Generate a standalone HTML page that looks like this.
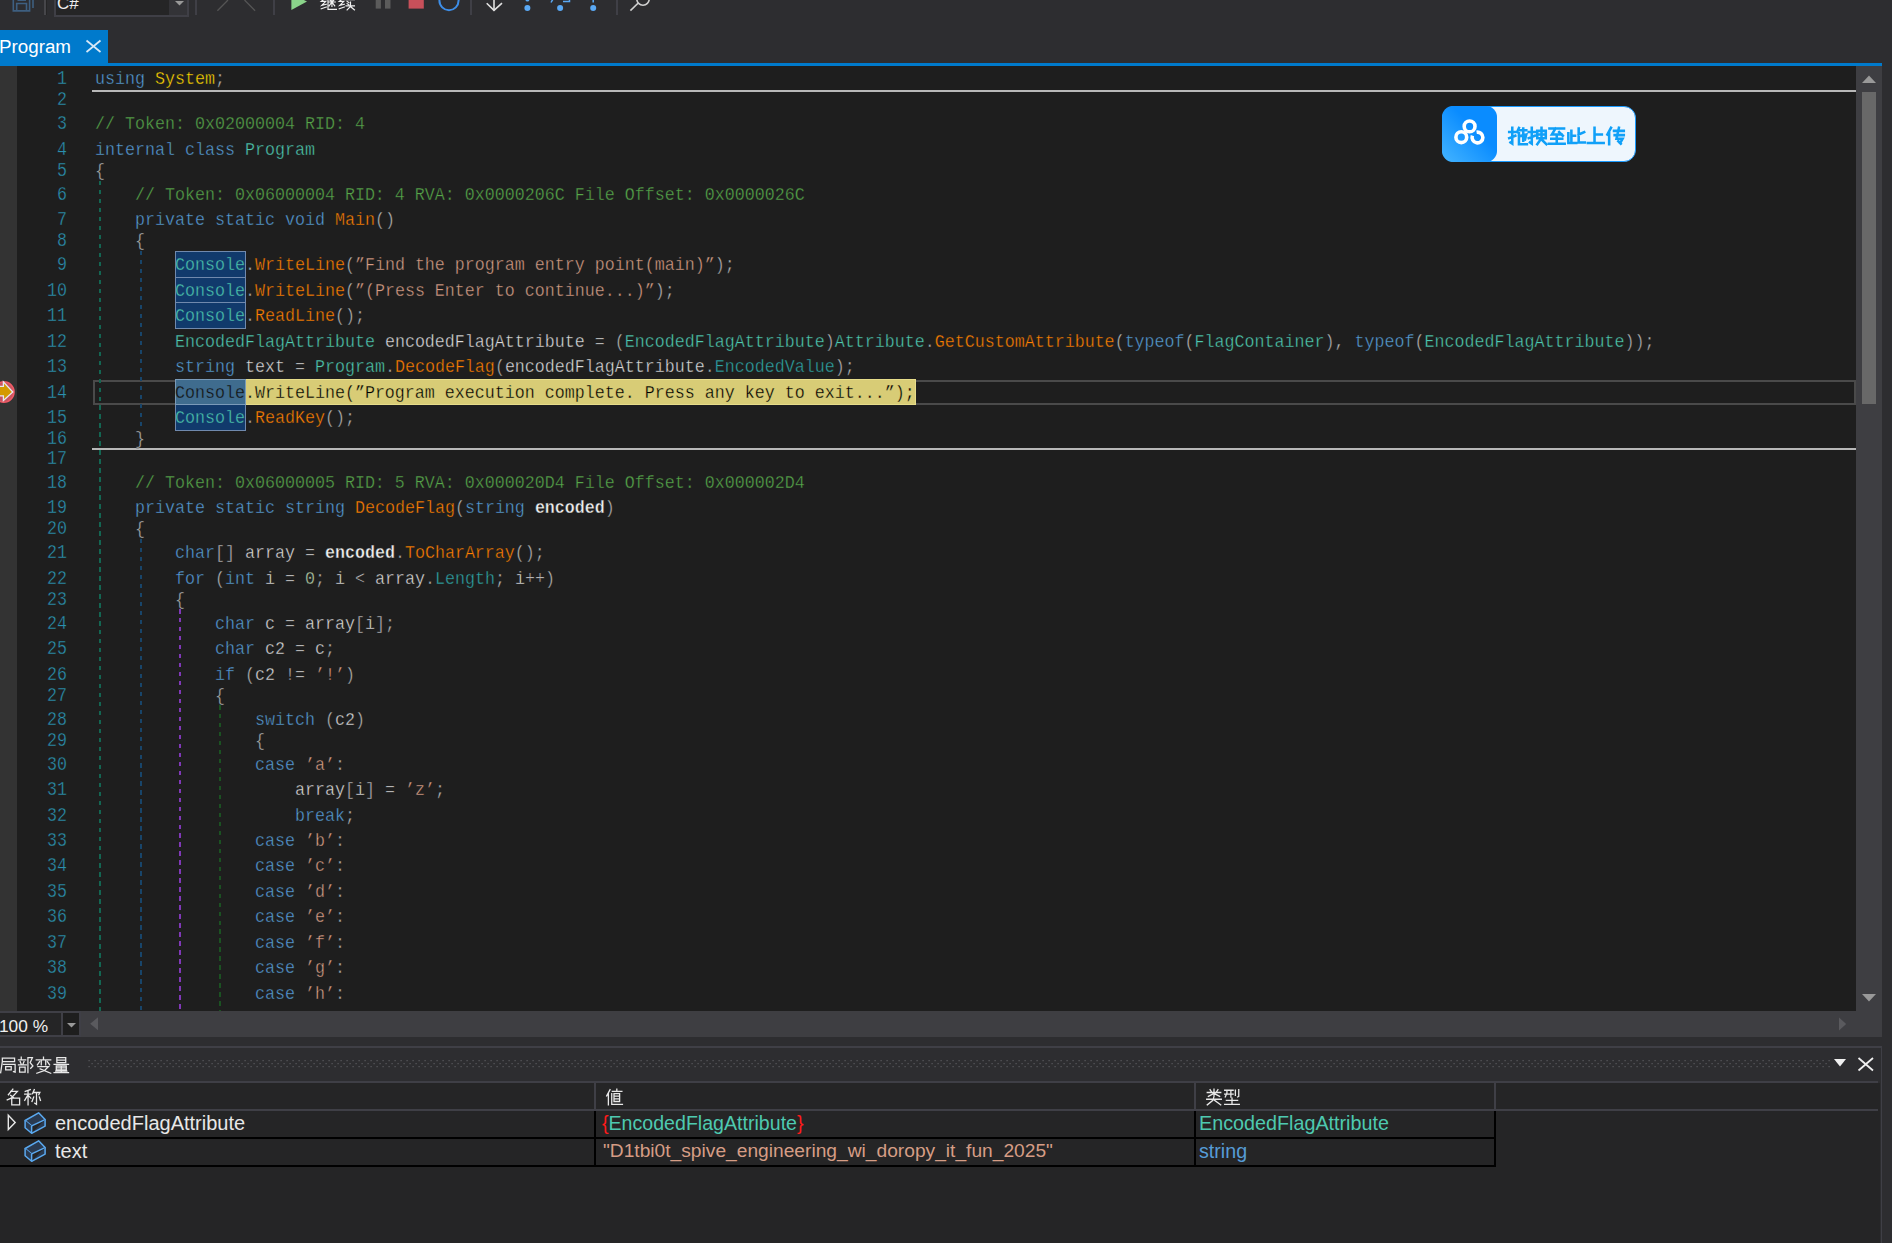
<!DOCTYPE html><html><head><meta charset="utf-8"><style>
*{margin:0;padding:0;box-sizing:border-box}
html,body{width:1892px;height:1243px;overflow:hidden;background:#2d2d30;position:relative;font-family:"Liberation Sans",sans-serif}
.abs{position:absolute}
#editor{position:absolute;left:0;top:66px;width:1856px;height:945px;background:#1e1e1e;overflow:hidden}
#gm{position:absolute;left:0;top:0;width:17px;height:945px;background:#333333}
.cl,.ln{position:absolute;height:25px;line-height:25px;white-space:pre;font-family:"Liberation Mono",monospace;font-size:16.67px;transform:scaleY(1.06);transform-origin:0 17px}
.cl{left:95px;color:#dcdcdc;-webkit-text-stroke:0.35px #1e1e1e}
.ln{-webkit-text-stroke:0.3px #1e1e1e;transform:scaleY(1.18)}
.ln{left:0;width:67px;text-align:right;color:#2b91af}
.k{color:#569cd6}.t{color:#4ec9b0}.m{color:#ff8000}.p{color:#b4b4b4}.s{color:#d69d85}.x{color:#dcdcdc}
.n{color:#ffd700}.c{color:#57a64a}.pr{color:#2ea3a3}.pa{color:#f0f0f0;font-weight:bold}.nu{color:#b5cea8}
.cb{color:#4ec9b0;-webkit-text-stroke:0.35px #113a6c}.cy{color:#111;-webkit-text-stroke:0.3px #3f6c8e}.y{color:#000;-webkit-text-stroke:0.3px #d8cc76}
</style></head><body>
<svg class="abs" style="left:0;top:0" width="60" height="18"><g fill="none" stroke="#3e5f80" stroke-width="1.6"><path d="M13.3 -2V10.9H29.6V-2"/><path d="M16.7 11V3.5H26.5V11"/><path d="M17.5 0.2H26"/><path d="M33 -1V8"/></g></svg><div class="abs" style="left:44px;top:0;width:2px;height:15px;background:#46464a"></div><div class="abs" style="left:46px;top:0;width:1px;height:15px;background:#252526"></div><div class="abs" style="left:54px;top:-2px;width:135px;height:19px;border:2px solid #3f3f46;background:#252526"></div><div class="abs" style="left:169px;top:0;width:18px;height:15px;background:#333337"></div><svg class="abs" style="left:170px;top:0" width="16" height="10"><path d="M5 1H14L9.5 5.5Z" fill="#999"/></svg><div class="abs" style="left:57px;top:-6px;height:20px;line-height:20px;font-size:17px;color:#f0f0f0">C#</div><div class="abs" style="left:195px;top:0;width:2px;height:15px;background:#3f3f46"></div><svg class="abs" style="left:200px;top:0" width="70" height="15"><g stroke="#555" stroke-width="1.3" fill="none"><path d="M17.4 10.7L28 0"/><path d="M44.5 0L55.1 10.7"/></g></svg><div class="abs" style="left:273px;top:0;width:2px;height:15px;background:#3f3f46"></div><svg class="abs" style="left:280px;top:0" width="400" height="20"><path d="M11.4 -6V10L27 1.5Z" fill="#8ad48a"/><rect x="95.7" y="-2" width="5.2" height="10.6" fill="#5b5b5b"/><rect x="105" y="-2" width="5.5" height="10.6" fill="#5b5b5b"/><rect x="128.6" y="-2" width="15.2" height="10.6" fill="#c8505a"/><circle cx="169" cy="0.6" r="9.6" fill="none" stroke="#3d8ee8" stroke-width="2"/><g stroke="#e0e0e0" stroke-width="1.6" fill="none"><path d="M214 -2V10.6"/><path d="M206.7 3.2L214 10.4L222 3.2"/></g><g fill="#5aa9f5"><circle cx="247.4" cy="7.9" r="3"/><circle cx="247.4" cy="-0.5" r="2"/><circle cx="280.1" cy="7.9" r="3"/><circle cx="313.2" cy="7.9" r="3"/></g><g stroke="#5aa9f5" stroke-width="1.5" fill="none"><path d="M271 2.5L273 -1"/><path d="M283 1.5H289.5V-2"/><path d="M313.2 -2V2.5"/></g></svg><svg class="abs" style="left:318.5px;top:-6.8px;overflow:visible" width="36.0" height="18.0" viewBox="0 0 32.0 16.0"><path transform="translate(0.00 0)" d="M2.5 1.5L5.5 4.5L2 7.5L6 7.5L2.5 11L6.5 10 M2 14L6.5 12.5 M8 2V14.5H15.5 M8 2H15 M11.5 3.5V12 M9 5.5L10.5 7 M14 5.5L12.5 7 M9 8H14.5 M11.5 8L9 11.5 M11.5 8L14 11.5" fill="none" stroke="#f0f0f0" stroke-width="1.05" stroke-linecap="square"/><path transform="translate(16.00 0)" d="M2.5 1.5L5.5 4.5L2 7.5L6 7.5L2.5 11L6.5 10 M2 14L6.5 12.5 M11.5 1V5 M8.5 3H14.5 M8 6H15.5 M9 7.5L10.5 8.5 M9 9.5L10.5 10.5 M8 11.5H15.5 M12 8V12 L9 15 M12.5 12.5L15.5 15" fill="none" stroke="#f0f0f0" stroke-width="1.05" stroke-linecap="square"/></svg><div class="abs" style="left:470px;top:0;width:2px;height:15px;background:#3f3f46"></div><div class="abs" style="left:616px;top:0;width:2px;height:15px;background:#3f3f46"></div><svg class="abs" style="left:620px;top:0" width="40" height="15"><g stroke="#d0d0d0" stroke-width="1.6" fill="none"><circle cx="23" cy="-1" r="6.2"/><path d="M10.4 10.6L18 3.2"/></g></svg><svg class="abs" style="left:80px;top:30px" width="28" height="33"><g stroke="#d8e8f6" stroke-width="1.7"><path d="M86.5 40.5L100.5 52" transform="translate(-80 -30)"/><path d="M100.5 40.5L86.5 52" transform="translate(-80 -30)"/></g></svg>
<div class="abs" style="left:0;top:30px;width:108px;height:36px;background:#007acc"></div>
<div class="abs" style="left:0;top:63px;width:1882px;height:3px;background:#007acc"></div>
<div class="abs" style="left:-1px;top:30px;height:33px;line-height:33px;font-size:18.8px;color:#fff">Program</div>
<div id="editor"><div id="gm"></div>
<div class="abs" style="left:92px;top:23.68px;width:1764px;height:2px;background:#b8b8b8"></div><div class="abs" style="left:92px;top:382.02px;width:1764px;height:2px;background:#b8b8b8"></div><div class="abs" style="left:92.5px;top:313.63px;width:1763.5px;height:24.96px;border:2.5px solid #4a4a4a"></div><div class="abs" style="left:99px;top:114.54px;width:2px;height:830.46px;background:repeating-linear-gradient(to bottom,#136652 0,#136652 4.5px,transparent 4.5px,transparent 8.98px)"></div><div class="abs" style="left:140px;top:185.03px;width:2px;height:179.02px;background:repeating-linear-gradient(to bottom,#18456a 0,#18456a 4.5px,transparent 4.5px,transparent 8.98px)"></div><div class="abs" style="left:140px;top:472.88px;width:2px;height:472.12px;background:repeating-linear-gradient(to bottom,#18456a 0,#18456a 4.5px,transparent 4.5px,transparent 8.98px)"></div><div class="abs" style="left:179px;top:543.37px;width:2px;height:401.63px;background:repeating-linear-gradient(to bottom,#8038b8 0,#8038b8 4.5px,transparent 4.5px,transparent 8.98px)"></div><div class="abs" style="left:219px;top:639.32px;width:2px;height:305.68px;background:repeating-linear-gradient(to bottom,#1b5222 0,#1b5222 4.5px,transparent 4.5px,transparent 8.98px)"></div><div class="abs" style="left:174.5px;top:312.93px;width:741px;height:26.06px;background:#d8cc76;border:1px solid #e6dc8a"></div><div class="abs" style="left:174.5px;top:185.33px;width:71px;height:26.46px;background:#113a6c;border:1px solid #7089ad"></div><div class="abs" style="left:174.5px;top:210.79px;width:71px;height:26.46px;background:#113a6c;border:1px solid #7089ad"></div><div class="abs" style="left:174.5px;top:236.25px;width:71px;height:26.46px;background:#113a6c;border:1px solid #7089ad"></div><div class="abs" style="left:174.5px;top:338.09px;width:71px;height:26.46px;background:#113a6c;border:1px solid #7089ad"></div><div class="abs" style="left:174.5px;top:312.93px;width:71px;height:26.06px;background:#3f6c8e;border:1px solid #7a9ab8"></div><svg class="abs" style="left:0;top:313.00px" width="17" height="26"><circle cx="3.8" cy="13" r="10.2" fill="#c85560" stroke="#f05a66" stroke-width="1.6"/><path d="M-4 7.3H3.4V2.9L12.8 13L3.4 21.5V16.8H-4Z" fill="#d49a00" stroke="#e8e8f0" stroke-width="1.3"/></svg>
<div class="ln" style="top:1.32px">1</div>
<div class="cl" style="top:1.32px"><span class="k">using</span> <span class="n">System</span><span class="p">;</span></div>
<div class="ln" style="top:22.31px">2</div>
<div class="cl" style="top:22.31px"></div>
<div class="ln" style="top:46.35px">3</div>
<div class="cl" style="top:46.35px"><span class="c">// Token: 0x02000004 RID: 4</span></div>
<div class="ln" style="top:71.81px">4</div>
<div class="cl" style="top:71.81px"><span class="k">internal</span> <span class="k">class</span> <span class="t">Program</span></div>
<div class="ln" style="top:92.80px">5</div>
<div class="cl" style="top:92.80px"><span class="p">{</span></div>
<div class="ln" style="top:116.84px">6</div>
<div class="cl" style="top:116.84px">    <span class="c">// Token: 0x06000004 RID: 4 RVA: 0x0000206C File Offset: 0x0000026C</span></div>
<div class="ln" style="top:142.30px">7</div>
<div class="cl" style="top:142.30px">    <span class="k">private</span> <span class="k">static</span> <span class="k">void</span> <span class="m">Main</span><span class="p">()</span></div>
<div class="ln" style="top:163.29px">8</div>
<div class="cl" style="top:163.29px">    <span class="p">{</span></div>
<div class="ln" style="top:187.33px">9</div>
<div class="cl" style="top:187.33px">        <span class="cb">Console</span><span class="p">.</span><span class="m">WriteLine</span><span class="p">(</span><span class="s">”Find the program entry point(main)”</span><span class="p">);</span></div>
<div class="ln" style="top:212.79px">10</div>
<div class="cl" style="top:212.79px">        <span class="cb">Console</span><span class="p">.</span><span class="m">WriteLine</span><span class="p">(</span><span class="s">”(Press Enter to continue...)”</span><span class="p">);</span></div>
<div class="ln" style="top:238.25px">11</div>
<div class="cl" style="top:238.25px">        <span class="cb">Console</span><span class="p">.</span><span class="m">ReadLine</span><span class="p">();</span></div>
<div class="ln" style="top:263.71px">12</div>
<div class="cl" style="top:263.71px">        <span class="t">EncodedFlagAttribute</span> <span class="x">encodedFlagAttribute</span> <span class="p">=</span> <span class="p">(</span><span class="t">EncodedFlagAttribute</span><span class="p">)</span><span class="t">Attribute</span><span class="p">.</span><span class="m">GetCustomAttribute</span><span class="p">(</span><span class="k">typeof</span><span class="p">(</span><span class="t">FlagContainer</span><span class="p">),</span> <span class="k">typeof</span><span class="p">(</span><span class="t">EncodedFlagAttribute</span><span class="p">));</span></div>
<div class="ln" style="top:289.17px">13</div>
<div class="cl" style="top:289.17px">        <span class="k">string</span> <span class="x">text</span> <span class="p">=</span> <span class="t">Program</span><span class="p">.</span><span class="m">DecodeFlag</span><span class="p">(</span><span class="x">encodedFlagAttribute</span><span class="p">.</span><span class="pr">EncodedValue</span><span class="p">);</span></div>
<div class="ln" style="top:314.63px">14</div>
<div class="cl" style="top:314.63px">        <span class="cy">Console</span><span class="y">.WriteLine(”Program execution complete. Press any key to exit...”);</span></div>
<div class="ln" style="top:340.09px">15</div>
<div class="cl" style="top:340.09px">        <span class="cb">Console</span><span class="p">.</span><span class="m">ReadKey</span><span class="p">();</span></div>
<div class="ln" style="top:361.08px">16</div>
<div class="cl" style="top:361.08px">    <span class="p">}</span></div>
<div class="ln" style="top:380.65px">17</div>
<div class="cl" style="top:380.65px"></div>
<div class="ln" style="top:404.69px">18</div>
<div class="cl" style="top:404.69px">    <span class="c">// Token: 0x06000005 RID: 5 RVA: 0x000020D4 File Offset: 0x000002D4</span></div>
<div class="ln" style="top:430.15px">19</div>
<div class="cl" style="top:430.15px">    <span class="k">private</span> <span class="k">static</span> <span class="k">string</span> <span class="m">DecodeFlag</span><span class="p">(</span><span class="k">string</span> <span class="pa">encoded</span><span class="p">)</span></div>
<div class="ln" style="top:451.14px">20</div>
<div class="cl" style="top:451.14px">    <span class="p">{</span></div>
<div class="ln" style="top:475.18px">21</div>
<div class="cl" style="top:475.18px">        <span class="k">char</span><span class="p">[]</span> <span class="x">array</span> <span class="p">=</span> <span class="pa">encoded</span><span class="p">.</span><span class="m">ToCharArray</span><span class="p">();</span></div>
<div class="ln" style="top:500.64px">22</div>
<div class="cl" style="top:500.64px">        <span class="k">for</span> <span class="p">(</span><span class="k">int</span> <span class="x">i</span> <span class="p">=</span> <span class="nu">0</span><span class="p">;</span> <span class="x">i</span> <span class="p">&lt;</span> <span class="x">array</span><span class="p">.</span><span class="pr">Length</span><span class="p">;</span> <span class="x">i</span><span class="p">++)</span></div>
<div class="ln" style="top:521.63px">23</div>
<div class="cl" style="top:521.63px">        <span class="p">{</span></div>
<div class="ln" style="top:545.67px">24</div>
<div class="cl" style="top:545.67px">            <span class="k">char</span> <span class="x">c</span> <span class="p">=</span> <span class="x">array</span><span class="p">[</span><span class="x">i</span><span class="p">];</span></div>
<div class="ln" style="top:571.13px">25</div>
<div class="cl" style="top:571.13px">            <span class="k">char</span> <span class="x">c2</span> <span class="p">=</span> <span class="x">c</span><span class="p">;</span></div>
<div class="ln" style="top:596.59px">26</div>
<div class="cl" style="top:596.59px">            <span class="k">if</span> <span class="p">(</span><span class="x">c2</span> <span class="p">!=</span> <span class="s">’!’</span><span class="p">)</span></div>
<div class="ln" style="top:617.58px">27</div>
<div class="cl" style="top:617.58px">            <span class="p">{</span></div>
<div class="ln" style="top:641.62px">28</div>
<div class="cl" style="top:641.62px">                <span class="k">switch</span> <span class="p">(</span><span class="x">c2</span><span class="p">)</span></div>
<div class="ln" style="top:662.61px">29</div>
<div class="cl" style="top:662.61px">                <span class="p">{</span></div>
<div class="ln" style="top:686.65px">30</div>
<div class="cl" style="top:686.65px">                <span class="k">case</span> <span class="s">’a’</span><span class="p">:</span></div>
<div class="ln" style="top:712.11px">31</div>
<div class="cl" style="top:712.11px">                    <span class="x">array</span><span class="p">[</span><span class="x">i</span><span class="p">]</span> <span class="p">=</span> <span class="s">’z’</span><span class="p">;</span></div>
<div class="ln" style="top:737.57px">32</div>
<div class="cl" style="top:737.57px">                    <span class="k">break</span><span class="p">;</span></div>
<div class="ln" style="top:763.03px">33</div>
<div class="cl" style="top:763.03px">                <span class="k">case</span> <span class="s">’b’</span><span class="p">:</span></div>
<div class="ln" style="top:788.49px">34</div>
<div class="cl" style="top:788.49px">                <span class="k">case</span> <span class="s">’c’</span><span class="p">:</span></div>
<div class="ln" style="top:813.95px">35</div>
<div class="cl" style="top:813.95px">                <span class="k">case</span> <span class="s">’d’</span><span class="p">:</span></div>
<div class="ln" style="top:839.41px">36</div>
<div class="cl" style="top:839.41px">                <span class="k">case</span> <span class="s">’e’</span><span class="p">:</span></div>
<div class="ln" style="top:864.87px">37</div>
<div class="cl" style="top:864.87px">                <span class="k">case</span> <span class="s">’f’</span><span class="p">:</span></div>
<div class="ln" style="top:890.33px">38</div>
<div class="cl" style="top:890.33px">                <span class="k">case</span> <span class="s">’g’</span><span class="p">:</span></div>
<div class="ln" style="top:915.79px">39</div>
<div class="cl" style="top:915.79px">                <span class="k">case</span> <span class="s">’h’</span><span class="p">:</span></div>
<div class="cl" style="top:941.25px">                <span class="k">case</span> <span class="s">’i’</span><span class="p">:</span></div>
</div>
<div class="abs" style="left:1856px;top:66px;width:26px;height:971px;background:#3e3e42"></div><div class="abs" style="left:1862px;top:92px;width:14px;height:312px;background:#686868"></div><svg class="abs" style="left:1856px;top:66px" width="26" height="945"><path d="M6 17H20L13 9.5Z" fill="#999"/><path d="M6 928H20L13 935.4Z" fill="#999"/></svg><div class="abs" style="left:1882px;top:0;width:10px;height:1243px;background:#2d2d30"></div><svg class="abs" style="left:80px;top:30px" width="28" height="33"><g stroke="#d8e8f6" stroke-width="1.7"><path d="M6.5 10.5L20.5 22"/><path d="M20.5 10.5L6.5 22"/></g></svg>
<div class="abs" style="left:0;top:1011px;width:1882px;height:26px;background:#3e3e42"></div><div class="abs" style="left:0;top:1011px;width:81px;height:26px;background:#3f3f46"></div><div class="abs" style="left:0;top:1013px;width:61px;height:22px;background:#252526"></div><div class="abs" style="left:63px;top:1013px;width:16px;height:22px;background:#1e1e1e"></div><svg class="abs" style="left:60px;top:1011px" width="40" height="26"><path d="M7 12H16L11.5 16.6Z" fill="#999"/><path d="M38 6.3V19.3L30.2 12.8Z" fill="#5a5a5e"/></svg><svg class="abs" style="left:1830px;top:1011px" width="26" height="26"><path d="M9 6.4V19.4L16.2 12.9Z" fill="#5a5a5e"/></svg><div class="abs" style="left:-1px;top:1016px;height:20px;line-height:20px;font-size:17.3px;color:#f0f0f0">100 %</div><div class="abs" style="left:0;top:1046px;width:1882px;height:2px;background:#3f3f46"></div><div class="abs" style="left:1880.5px;top:1046px;width:1.5px;height:197px;background:#3f3f46"></div><div class="abs" style="left:0;top:1083px;width:1880px;height:160px;background:#252526"></div><div class="abs" style="left:0;top:1081px;width:1878px;height:2px;background:#3f3f46"></div><svg class="abs" style="left:-1.0px;top:1056.0px;overflow:visible" width="71.2" height="17.8" viewBox="0 0 64.0 16.0"><path transform="translate(0.00 0)" d="M3 2H14V5H3 M3 2V5L1.5 15 M4 7.5H14.5V14.5L13 14 M6 9.5H11V12.5H6Z" fill="none" stroke="#e8e8e8" stroke-width="1.15" stroke-linecap="square"/><path transform="translate(16.00 0)" d="M4 1V3 M1.5 3.5H8 M3 5L4 7.5 M6.5 5L5.5 7.5 M1.5 8H8.5 M2.5 10H7.5V14.5H2.5Z M10 1.5V15 M10 1.5H14L12 6L14.5 9L12.5 11" fill="none" stroke="#e8e8e8" stroke-width="1.15" stroke-linecap="square"/><path transform="translate(32.00 0)" d="M8 1V3 M1.5 3.5H14.5 M6 4V8 M10 4V8 M4.5 5L2.5 8 M11.5 5L13.5 8 M3 9.5H12.5L9 13L2 15.5 M5 11.5L14.5 15.5" fill="none" stroke="#e8e8e8" stroke-width="1.15" stroke-linecap="square"/><path transform="translate(48.00 0)" d="M4 1.5H12V6H4Z M4 3.75H12 M1.5 7.5H14.5 M3.5 9H12.5V12.5H3.5Z M3.5 10.75H12.5 M8 9V15 M3 13.5H13 M1.5 15H14.5" fill="none" stroke="#e8e8e8" stroke-width="1.15" stroke-linecap="square"/></svg><svg class="abs" style="left:88px;top:1059px" width="1742" height="10"><defs><pattern id="grip" width="6" height="6" patternUnits="userSpaceOnUse"><rect x="0.5" y="1" width="1.2" height="1.2" fill="#5a5a5e"/><rect x="3.5" y="4" width="1.2" height="1.2" fill="#5a5a5e"/></pattern></defs><rect width="1742" height="10" fill="url(#grip)"/></svg><svg class="abs" style="left:1830px;top:1052px" width="50" height="24"><path d="M4 7H16L10 14.5Z" fill="#f0f0f0"/><g stroke="#f0f0f0" stroke-width="1.8"><path d="M28.5 6L43 18.5"/><path d="M43 6L28.5 18.5"/></g></svg><div class="abs" style="left:0;top:1109px;width:1878px;height:2px;background:#3f3f46"></div><div class="abs" style="left:594.0px;top:1083px;width:2.2px;height:26px;background:#3f3f46"></div><div class="abs" style="left:594.0px;top:1111px;width:2.3px;height:56px;background:#000"></div><div class="abs" style="left:1193.5px;top:1083px;width:2.2px;height:26px;background:#3f3f46"></div><div class="abs" style="left:1193.5px;top:1111px;width:2.3px;height:56px;background:#000"></div><div class="abs" style="left:1493.7px;top:1083px;width:2.2px;height:26px;background:#3f3f46"></div><div class="abs" style="left:1493.7px;top:1111px;width:2.3px;height:56px;background:#000"></div><svg class="abs" style="left:4.5px;top:1088.0px;overflow:visible" width="36.0" height="18.0" viewBox="0 0 32.0 16.0"><path transform="translate(0.00 0)" d="M7 1L3 6 M5 3H11L5.5 9L2 10.5 M5 6.5L7.5 8.5 M6 9H13V15H6Z" fill="none" stroke="#e8e8e8" stroke-width="1.15" stroke-linecap="square"/><path transform="translate(16.00 0)" d="M6.5 1.5L2 3 M1.5 5.5H7 M4.5 3V15 M4.5 6L1.5 11 M4.5 6.5L7 9 M10 1.5L8.5 5 M9 4H15L14 6 M12 5V14.5L10.5 13.5 M9.5 8L8 12 M14.5 8L15.5 11" fill="none" stroke="#e8e8e8" stroke-width="1.15" stroke-linecap="square"/></svg><svg class="abs" style="left:604.5px;top:1087.8px;overflow:visible" width="18.0" height="18.0" viewBox="0 0 16.0 16.0"><path transform="translate(0.00 0)" d="M4.5 1.5L1.5 7 M3 5V15 M6.5 3H15 M10.5 1V3 M8 5H13V12H8Z M8 7.3H13 M8 9.6H13 M6 5V14.5H15.5" fill="none" stroke="#e8e8e8" stroke-width="1.15" stroke-linecap="square"/></svg><svg class="abs" style="left:1204.5px;top:1087.8px;overflow:visible" width="36.0" height="18.0" viewBox="0 0 32.0 16.0"><path transform="translate(0.00 0)" d="M8 1V7 M2 4H14 M4.5 1.5L5.5 3 M11.5 1.5L10.5 3 M7.5 5L3 7.5 M8.5 5L13 7.5 M1.5 10H14.5 M8 7.5L7 11L2 15 M8.5 11L14 15" fill="none" stroke="#e8e8e8" stroke-width="1.15" stroke-linecap="square"/><path transform="translate(16.00 0)" d="M1.5 2H9 M1.5 5.5H9 M3.5 2V4.5L2 8 M7 2V8 M11 2V6.5 M14 1.5V7.5L13 8 M8 9V14 M3 11H13 M1.5 14.5H14.5" fill="none" stroke="#e8e8e8" stroke-width="1.15" stroke-linecap="square"/></svg><div class="abs" style="left:0;top:1137px;width:1496px;height:2px;background:#000"></div><div class="abs" style="left:0;top:1165px;width:1496px;height:2px;background:#000"></div><svg class="abs" style="left:0;top:1111px" width="20" height="26"><path d="M8.3 4.3V18.6L15.2 11.5Z" fill="none" stroke="#e8e8e8" stroke-width="1.4"/></svg><svg class="abs" style="left:24px;top:1112px" width="26" height="24"><g fill="#2a3a50" stroke="#5aa9f0" stroke-width="1.5" stroke-linejoin="round"><path d="M1.1 8.5L14.6 0.8L21.1 7.6L7.6 13.9Z"/><path d="M1.1 8.5V15.8L7.6 21.3V13.9"/><path d="M7.6 21.3L21.1 14.1V7.6"/></g></svg><svg class="abs" style="left:24px;top:1140px" width="26" height="24"><g fill="#2a3a50" stroke="#5aa9f0" stroke-width="1.5" stroke-linejoin="round"><path d="M1.1 8.5L14.6 0.8L21.1 7.6L7.6 13.9Z"/><path d="M1.1 8.5V15.8L7.6 21.3V13.9"/><path d="M7.6 21.3L21.1 14.1V7.6"/></g></svg><div style="position:absolute;height:26px;line-height:26px;white-space:pre;left:55px;top:1110px;font-size:20px;color:#e8e8e8">encodedFlagAttribute</div><div style="position:absolute;height:26px;line-height:26px;white-space:pre;left:55px;top:1138px;font-size:20px;color:#e8e8e8">text</div><div style="position:absolute;height:26px;line-height:26px;white-space:pre;left:602px;top:1110px;font-size:19.6px;color:#4ec9b0"><span style="color:#ff1a1a">{</span>EncodedFlagAttribute<span style="color:#ff1a1a">}</span></div><div style="position:absolute;height:26px;line-height:26px;white-space:pre;left:603px;top:1138px;font-size:19.2px;color:#d69d85">"D1tbi0t_spive_engineering_wi_doropy_it_fun_2025"</div><div style="position:absolute;height:26px;line-height:26px;white-space:pre;left:1199px;top:1110px;font-size:19.75px;color:#4ec9b0">EncodedFlagAttribute</div><div style="position:absolute;height:26px;line-height:26px;white-space:pre;left:1199px;top:1138px;font-size:19.7px;color:#569cd6">string</div><div class="abs" style="left:1442px;top:106px;width:194px;height:56px;border-radius:12px;background:#eef6fd;border:1px solid #1a9bff"></div><div class="abs" style="left:1442px;top:106px;width:55px;height:56px;border-radius:11px;background:linear-gradient(45deg,#44b4ff 0%,#0a8cff 60%,#0a8cff 100%)"></div><svg class="abs" style="left:1442px;top:106px" width="55" height="56"><g fill="none" stroke="#fff" stroke-width="3.6"><circle cx="27.6" cy="20.4" r="5.4"/><circle cx="19.3" cy="31.2" r="5.4"/><path d="M30.4 29.65A5.4 5.4 0 1 0 34.56 26.18"/></g></svg><svg class="abs" style="left:1507.5px;top:125.5px;overflow:visible" width="117.0" height="19.5" viewBox="0 0 96.0 16.0"><path transform="translate(0.00 0)" d="M1 5H6 M3.5 1.5V14.5L2 13.5 M1 10L6 8 M9 1.5L7.5 5 M8.5 3.5H15 M9 6V15H15.5 M12.5 2V12 M9 8.5L15 7 L14 11" fill="none" stroke="#10a0f8" stroke-width="2.10" stroke-linecap="square"/><path transform="translate(16.00 0)" d="M1 5H6 M3.5 1.5V14.5L2 13.5 M1 10L6 8 M8 4H15V10H8Z M8 7H15 M11.5 1.5V10 L8 15 M11.5 11L15.5 15" fill="none" stroke="#10a0f8" stroke-width="2.10" stroke-linecap="square"/><path transform="translate(32.00 0)" d="M2 2H14 M7 2L4 7H12 M10 5L13 8 M8 8V14 M3.5 10.5H12.5 M1.5 14.5H14.5" fill="none" stroke="#10a0f8" stroke-width="2.10" stroke-linecap="square"/><path transform="translate(48.00 0)" d="M4 4V14 M4 8H7 M1.5 14H8 M1.5 6V14 M10 2V13.5H15 M10 7L14.5 5" fill="none" stroke="#10a0f8" stroke-width="2.10" stroke-linecap="square"/><path transform="translate(64.00 0)" d="M7 1.5V14 M7 7H13 M1.5 14H14.5" fill="none" stroke="#10a0f8" stroke-width="2.10" stroke-linecap="square"/><path transform="translate(80.00 0)" d="M4.5 1.5L1.5 7 M3 5V15 M7 4H15 M7.5 7.5H15 M11 1.5L9 10.5H14L12 14 M10.5 12.5L12.5 14.5" fill="none" stroke="#10a0f8" stroke-width="2.10" stroke-linecap="square"/></svg>
</body></html>
